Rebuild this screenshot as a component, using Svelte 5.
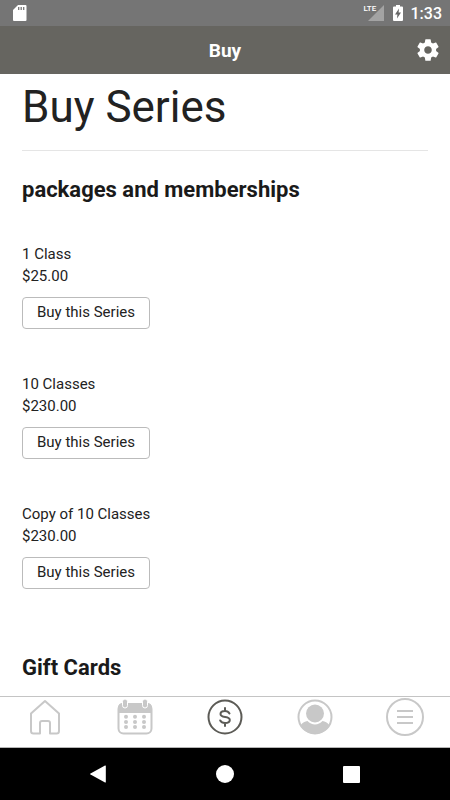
<script lang="ts">
	interface Series {
		id: string;
		name: string;
		price: string;
	}

	const series: Series[] = [
		{ id: 'one', name: '1 Class', price: '$25.00' },
		{ id: 'ten', name: '10 Classes', price: '$230.00' },
		{ id: 'ten-copy', name: 'Copy of 10 Classes', price: '$230.00' }
	];

	const calendarDots = [0, 1, 2].flatMap((row) =>
		[0, 1, 2].map((col) => ({ x: 10 + col * 9, y: 18.7 + row * 5.2 }))
	);
</script>

<div class="screen">
	<div class="status-bar">
		<svg class="sd-icon" viewBox="0 0 14 16" width="14" height="16" aria-hidden="true">
			<path fill="#fff" d="M5 0h7.500q1 0 1 1v14q0 1-1 1h-11.500q-1 0-1-1V5z" />
			<path stroke="#777" stroke-width="1.300" d="M5.700 2v3M8.200 2v3M10.700 2v3" />
		</svg>
		<div class="status-right">
			<div class="signal">
				<span class="lte">LTE</span>
				<svg viewBox="0 0 16 16" width="16" height="16" aria-hidden="true">
					<path fill="#a3a3a3" d="M16 0v16H0z" />
				</svg>
			</div>
			<svg class="battery" viewBox="0 0 10 16" width="10" height="16" aria-hidden="true">
				<path fill="#fff" d="M3 0h4v1.500h2q1 0 1 1V15q0 1-1 1H1q-1 0-1-1V2.500q0-1 1-1h2z" />
				<path fill="#666" d="M6 3.500L2 9.500h2.400L4 13.500l4-6H5.600z" />
			</svg>
			<span class="clock">1:33</span>
		</div>
	</div>

	<header class="app-bar">
		<span class="app-title">Buy</span>
		<button class="settings-btn" type="button" aria-label="Settings">
			<svg viewBox="0 0 24 24" width="26" height="26" fill="currentColor" aria-hidden="true">
				<path
					d="M19.430 12.980c.040-.320.070-.640.070-.980s-.030-.660-.070-.980l2.110-1.650c.190-.150.240-.420.120-.640l-2-3.460c-.120-.220-.390-.300-.610-.220l-2.490 1c-.520-.400-1.080-.730-1.690-.980l-.380-2.650C14.460 2.180 14.250 2 14 2h-4c-.250 0-.460.180-.490.420l-.380 2.650c-.610.250-1.170.590-1.690.980l-2.490-1c-.230-.090-.490 0-.610.220l-2 3.460c-.130.220-.070.490.120.640l2.110 1.650c-.040.320-.070.650-.070.980s.030.660.070.980l-2.110 1.650c-.190.150-.240.420-.120.640l2 3.460c.120.220.390.300.610.220l2.490-1c.520.400 1.080.730 1.690.980l.380 2.650c.030.240.240.420.490.420h4c.250 0 .460-.180.490-.420l.380-2.650c.610-.250 1.170-.590 1.690-.980l2.490 1c.230.090.490 0 .610-.220l2-3.460c.120-.220.070-.490-.120-.640l-2.110-1.650zM12 15.500c-1.930 0-3.500-1.570-3.500-3.500s1.570-3.500 3.500-3.500 3.500 1.570 3.500 3.500-1.570 3.500-3.500 3.500z"
				/>
			</svg>
		</button>
	</header>

	<main class="content">
		<h1>Buy Series</h1>
		<section>
			<h2>packages and memberships</h2>
			<ul class="series-list">
				{#each series as item (item.id)}
					<li class="series">
						<p>{item.name}</p>
						<p>{item.price}</p>
						<button class="buy-btn" type="button">Buy this Series</button>
					</li>
				{/each}
			</ul>
		</section>
		<section>
			<h2>Gift Cards</h2>
		</section>
	</main>

	<nav class="tab-bar">
		<a href="#home" aria-label="Home">
			<svg viewBox="0 0 38 38" width="38" height="38" fill="none" aria-hidden="true">
				<path
					stroke="currentColor"
					stroke-width="2"
					stroke-linejoin="round"
					d="M5 15.500L19 3l14 12.500V33q0 2.500-2.500 2.500H24V25q0-2-2-2h-6q-2 0-2 2v10.500H7.500Q5 35.500 5 33z"
				/>
			</svg>
		</a>
		<a href="#schedule" aria-label="Schedule">
			<svg viewBox="0 0 38 38" width="38" height="38" fill="none" aria-hidden="true">
				<rect x="2.500" y="6" width="33" height="29.500" rx="5" stroke="currentColor" stroke-width="2" />
				<path fill="currentColor" d="M2 15v-5q0-5 5-5h24q5 0 5 5v5z" />
				<rect x="6.500" y="1" width="5" height="9" rx="2.500" fill="currentColor" stroke="#fff" />
				<rect x="26.500" y="1" width="5" height="9" rx="2.500" fill="currentColor" stroke="#fff" />
				{#each calendarDots as dot}
					<circle cx={dot.x} cy={dot.y} r="2" fill="currentColor" />
				{/each}
			</svg>
		</a>
		<a class="active" href="#buy" aria-label="Buy" aria-current="page">
			<svg viewBox="0 0 38 38" width="38" height="38" fill="none" stroke="currentColor" aria-hidden="true">
				<circle cx="19" cy="19" r="16.500" stroke-width="2" />
				<path
					stroke-width="2"
					stroke-linecap="round"
					d="M19 10v3M19 25v3M23.500 15.500C22.500 13.700 21 13 19 13c-2.700 0-4.500 1.200-4.500 3.100 0 4.400 9.300 1.600 9.300 5.900 0 2-1.900 3-4.800 3-2.300 0-3.900-.8-4.800-2.500"
				/>
			</svg>
		</a>
		<a href="#profile" aria-label="Profile">
			<svg viewBox="0 0 38 38" width="38" height="38" aria-hidden="true">
				<circle cx="19" cy="19" r="16.500" fill="none" stroke="currentColor" stroke-width="2" />
				<circle cx="19" cy="15.500" r="9" fill="currentColor" />
				<path
					fill="currentColor"
					d="M4.500 27.500C6.500 24.500 9 23.500 11.500 23c4 4.500 11 4.500 15 0 2.500.5 5 1.500 7 4.500C30.500 33 25 36 19 36S7.500 33 4.500 27.500z"
				/>
			</svg>
		</a>
		<a href="#more" aria-label="More">
			<svg viewBox="0 0 38 38" width="38" height="38" fill="none" stroke="currentColor" aria-hidden="true">
				<circle cx="19" cy="19" r="18" stroke-width="2" />
				<path stroke-width="2" d="M11 13h16M11 19h16M11 25h16" />
			</svg>
		</a>
	</nav>

	<div class="system-nav">
		<button type="button" aria-label="Back">
			<svg viewBox="0 0 18 18" width="18" height="18" fill="currentColor" aria-hidden="true">
				<path d="M15 .5q.8-.4.800.500v16q0 .9-.8.500L.5 9.600q-.8-.6 0-1.200z" />
			</svg>
		</button>
		<button type="button" aria-label="Home screen">
			<svg viewBox="0 0 18 18" width="18" height="18" fill="currentColor" aria-hidden="true">
				<circle cx="9" cy="9" r="9" />
			</svg>
		</button>
		<button type="button" aria-label="Recent apps">
			<svg viewBox="0 0 18 18" width="18" height="18" fill="currentColor" aria-hidden="true">
				<rect x="1" y="1" width="17" height="17" rx="1" />
			</svg>
		</button>
	</div>
</div>

<style>
	:global(body) {
		background: #fff;
	}

	.screen {
		display: flex;
		flex-direction: column;
		min-height: 100vh;
		font-family: Roboto, 'Liberation Sans', sans-serif;
		color: #222;
	}

	.status-bar {
		display: flex;
		align-items: center;
		justify-content: space-between;
		height: 26px;
		padding: 0 8px 0 13px;
		background: #757575;
		color: #fff;
	}

	.status-right {
		display: flex;
		align-items: center;
	}

	.signal {
		position: relative;
		display: flex;
		padding-left: 4px;
		margin-right: 9px;
	}

	.lte {
		position: absolute;
		top: 0;
		left: 0;
		font-size: 8px;
		line-height: 8px;
		font-weight: 500;
	}

	.battery {
		margin-right: 8px;
	}

	.clock {
		padding-top: 2px;
		font-size: 16px;
		font-weight: 500;
		line-height: 24px;
	}

	.app-bar {
		display: grid;
		grid-template-columns: 1fr auto 1fr;
		align-items: center;
		height: 48px;
		background: #666560;
		color: #fff;
	}

	.app-title {
		grid-column: 2;
		font-size: 19px;
		font-weight: 700;
	}

	.settings-btn {
		display: flex;
		justify-self: end;
		padding: 0;
		margin-right: 9px;
		border: 0;
		background: none;
		color: inherit;
		cursor: pointer;
	}

	.content {
		flex: 1;
		padding: 0 22px 12px;
	}

	h1 {
		margin: 0 0 25px;
		padding: 9px 0 19px;
		border-bottom: 1px solid #e5e5e5;
		font-size: 44px;
		font-weight: 400;
		line-height: 48px;
	}

	h2 {
		margin: 0;
		font-size: 22px;
		font-weight: 700;
		line-height: 28px;
		color: #1a1a1a;
	}

	.series-list {
		margin: 0;
		padding: 39px 0 65px;
		list-style: none;
		display: flex;
		flex-direction: column;
		gap: 44px;
	}

	.series p {
		margin: 0;
		font-size: 15px;
		line-height: 22px;
	}

	.buy-btn {
		display: block;
		margin-top: 10px;
		padding: 4px 14px 6px;
		border: 1px solid #bbb;
		border-radius: 4px;
		background: #fff;
		color: #222;
		font-family: inherit;
		font-size: 15px;
		line-height: 20px;
		cursor: pointer;
	}

	.tab-bar {
		display: grid;
		grid-template-columns: repeat(5, 1fr);
		height: 50px;
		border-top: 1px solid #c4c4c4;
		border-bottom: 1px solid #b5b5b5;
		background: #fff;
	}

	.tab-bar a {
		display: flex;
		justify-content: center;
		padding-top: 1px;
		color: #c8c8c8;
	}

	.tab-bar .active {
		color: #5c5b56;
	}

	.system-nav {
		display: flex;
		justify-content: space-between;
		align-items: center;
		height: 52px;
		padding: 0 20%;
		background: #000;
	}

	.system-nav button {
		display: flex;
		padding: 0;
		border: 0;
		background: none;
		color: #fff;
	}
</style>
